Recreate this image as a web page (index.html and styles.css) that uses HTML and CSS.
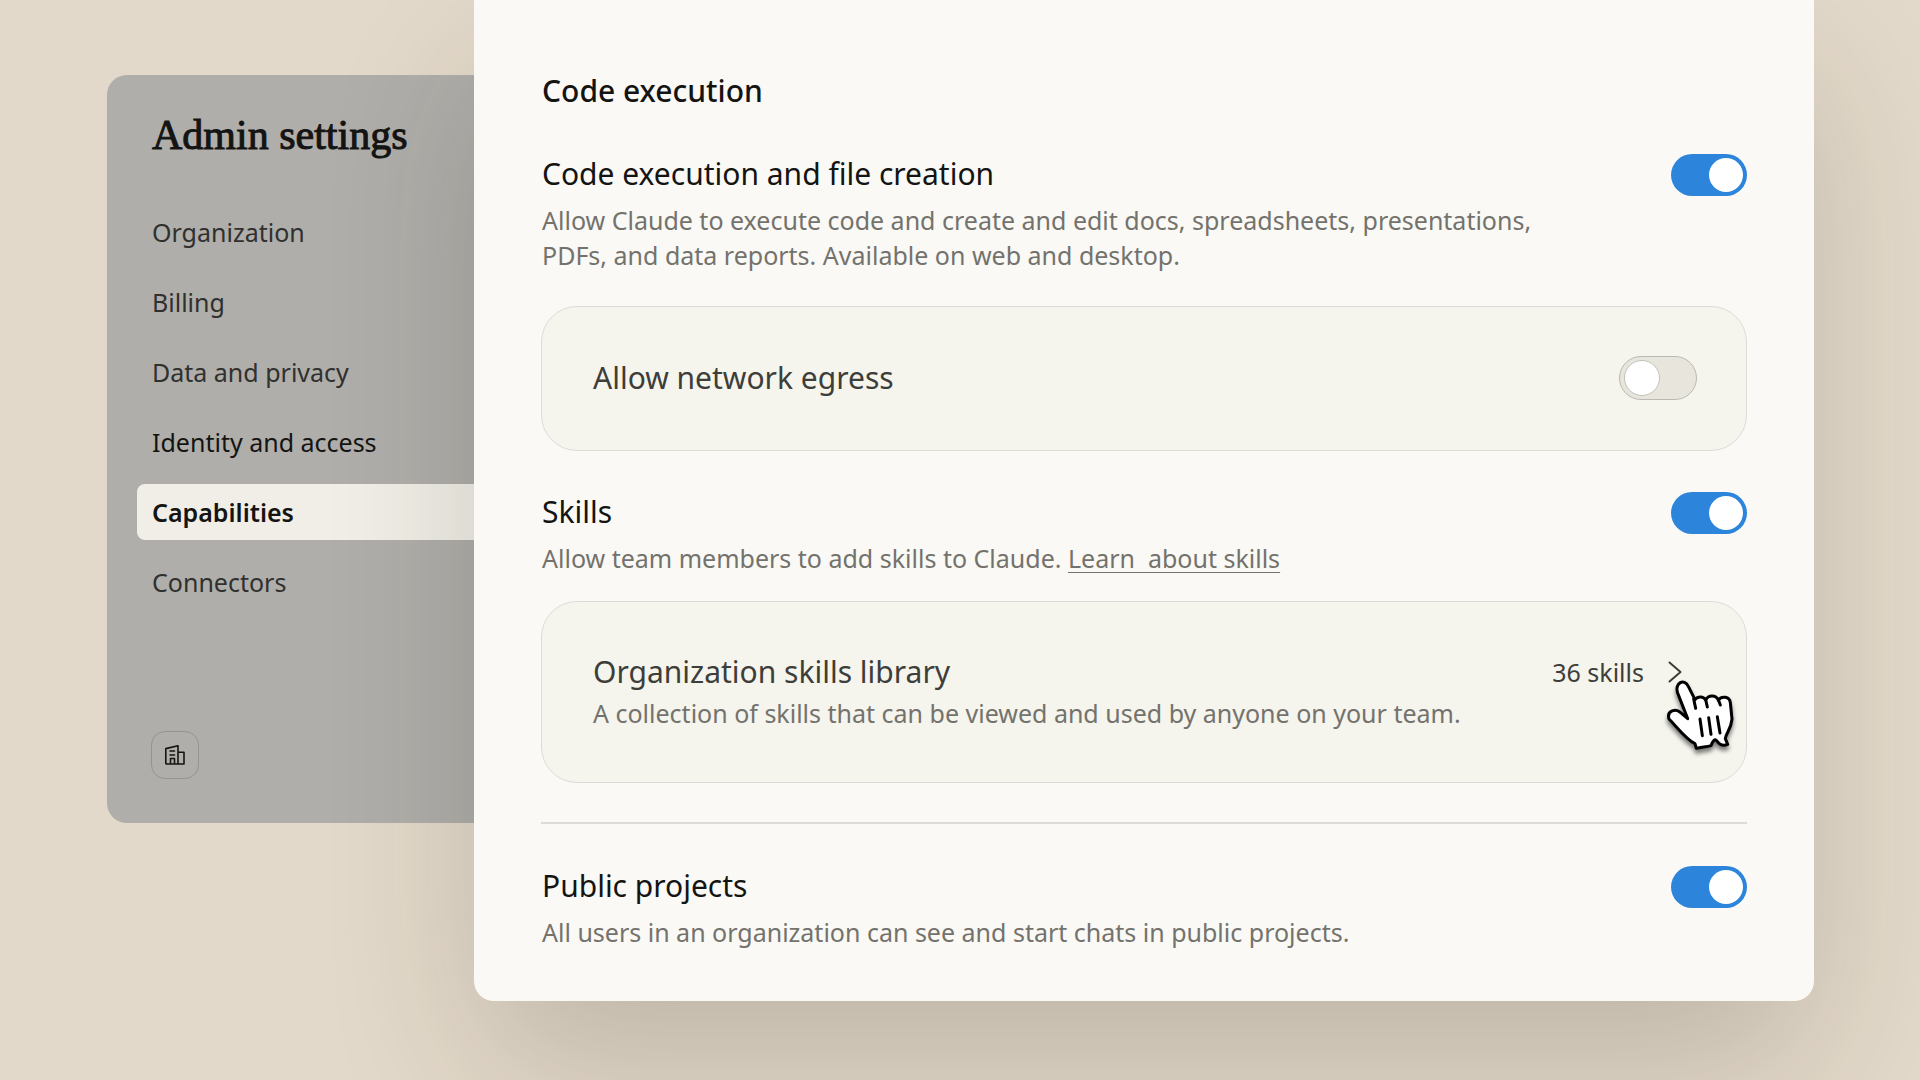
FILE: index.html
```html
<!DOCTYPE html>
<html lang="en">
  <head>
    <meta charset="UTF-8" />
    <meta name="viewport" content="width=device-width, initial-scale=1.0" />
    <title>Admin settings</title>
    <link rel="stylesheet" href="styles.css">
  </head>
  <body>
    <div class="layout">
      <aside class="sidebar">
        <h1>Admin settings</h1>
        <nav class="menu">
          <a href="#organization">Organization</a>
          <a href="#billing">Billing</a>
          <a href="#privacy">Data and privacy</a>
          <a href="#identity" class="strong">Identity and access</a>
          <a href="#capabilities" class="active" aria-current="page">Capabilities</a>
          <a href="#connectors">Connectors</a>
        </nav>
        <button type="button" class="org-button" aria-label="Switch organization">
          <svg viewBox="0 0 20 20" width="20" height="22" fill="none" stroke="currentColor" stroke-width="1.6" stroke-linejoin="round" stroke-linecap="round">
            <path d="M.8 18.500V3.600L13 .8v18.200H1.300zM13 7.300h6V19H13M5 6h4.500M5 10h4.500M5.500 18.800v-5.300h4v5.300" />
          </svg>
        </button>
      </aside>

      <main class="panel">
        <h2>Code execution</h2>

        <section class="setting">
          <div class="setting-text">
            <label for="codeExecution">Code execution and file creation</label>
            <p>Allow Claude to execute code and create and edit docs, spreadsheets, presentations, PDFs, and data reports. Available on web and desktop.</p>
          </div>
          <input type="checkbox" role="switch" class="toggle" id="codeExecution" checked />
        </section>

        <div class="card card-toggle">
          <label for="networkEgress">Allow network egress</label>
          <input type="checkbox" role="switch" class="toggle" id="networkEgress" />
        </div>

        <section class="setting">
          <div class="setting-text">
            <label for="skills">Skills</label>
            <p>Allow team members to add skills to Claude. <a href="#skills-help">Learn &nbsp;about skills</a></p>
          </div>
          <input type="checkbox" role="switch" class="toggle" id="skills" checked />
        </section>

        <div class="card card-library">
          <div class="setting-text">
            <h3>Organization skills library</h3>
            <p>A collection of skills that can be viewed and used by anyone on your team.</p>
          </div>
          <button type="button" class="library-button">
            36 skills
            <svg class="chevron" viewBox="0 0 14 22" width="14" height="22" fill="none" stroke="currentColor" stroke-width="2" stroke-linecap="round" stroke-linejoin="round">
              <path d="M1.500 1.500L12.500 11l-11 9.500" />
            </svg>
            <svg class="cursor" viewBox="436 176 216 240" width="72" height="80" aria-hidden="true">
              <path d="M504 295L474 218C464 188 494 172 506 198L526 238C534 228 550 226 558 239C566 224 588 222 596 239C606 226 630 228 632 247L637 296C634 330 618 338 617 355L624 372C612 378 600 374 590 360C585 356 580 360 574 376C560 380 545 380 530 384L526 370C500 358 470 318 448 296C440 270 470 264 482 276Z" />
              <path class="lines" d="M522 236L528 264M558 238L563 260M596 238L602 254M541 296L548 346M567 292L574 342M593 289L601 338" />
            </svg>
          </button>
        </div>

        <hr />

        <section class="setting">
          <div class="setting-text">
            <label for="publicProjects">Public projects</label>
            <p>All users in an organization can see and start chats in public projects.</p>
          </div>
          <input type="checkbox" role="switch" class="toggle" id="publicProjects" checked />
        </section>
      </main>
    </div>
  </body>
</html>
```

FILE: styles.css
```css
* {
  margin: 0;
  padding: 0;
  box-sizing: border-box;
}

body {
  min-height: 100vh;
  background-color: #e3d9ca;
  color: #141413;
  font-family: "Noto Sans", sans-serif;
  overflow: hidden;
}

a {
  color: inherit;
}

.layout {
  display: grid;
  grid-template-columns: 367px 1fr;
  align-items: start;
  margin: 0 106px 0 107px;
}

/* Sidebar */

.sidebar {
  display: flex;
  flex-direction: column;
  align-items: flex-start;
  margin-top: 75px;
  padding: 32px 0 44px 30px;
  background-color: #afaeaa;
  border-radius: 20px 0 0 20px;
}

h1 {
  padding-left: 15px;
  font-family: "Liberation Serif", serif;
  font-size: 42px;
  font-weight: 400;
  line-height: 56px;
  -webkit-text-stroke: 1px currentColor;
}

.menu {
  display: flex;
  flex-direction: column;
  gap: 14px;
  width: 100%;
  margin-top: 41px;
}

.menu a {
  padding-left: 15px;
  border-radius: 8px 0 0 8px;
  color: #30302e;
  font-size: 25px;
  line-height: 56px;
  text-decoration: none;
}

.menu .strong {
  color: #141413;
}

.menu .active {
  background-color: #f0eee6;
  color: #141413;
  font-weight: 600;
}

.org-button {
  display: flex;
  align-items: center;
  justify-content: center;
  width: 48px;
  height: 48px;
  margin: 121px 0 0 14px;
  border: 1px solid #949390;
  border-radius: 14px;
  background: none;
  color: #141413;
}

/* Main panel */

.panel {
  position: relative;
  padding: 71px 67px 51px;
  background-color: #faf9f5;
  border-radius: 0 0 20px 20px;
  box-shadow: 0 70px 160px -10px rgba(40, 35, 25, 0.2);
}

h2 {
  margin-bottom: 43px;
  padding-left: 1px;
  font-size: 30px;
  font-weight: 500;
  line-height: 40px;
}

.setting {
  display: flex;
  justify-content: space-between;
  align-items: flex-start;
  padding-left: 1px;
}

.setting-text {
  max-width: 1030px;
}

.setting-text label,
.card label,
h3 {
  display: block;
  font-size: 30px;
  font-weight: 400;
  line-height: 40px;
}

.setting-text p {
  margin-top: 9px;
  color: #73726c;
  font-size: 25px;
  line-height: 35px;
}

.setting-text a {
  text-underline-offset: 4px;
  text-decoration-thickness: 1px;
}

.card {
  display: flex;
  justify-content: space-between;
  align-items: center;
  padding: 49px 49px 50px 51px;
  border: 1px solid #dcdbd6;
  border-radius: 36px;
  background-color: #f5f4ed;
  color: #3d3d3a;
}

.card-toggle {
  margin: 33px 0 41px;
}

.card-library {
  align-items: flex-start;
  margin: 25px 0 39px;
  padding-top: 50px;
  padding-bottom: 51px;
}

.card-library p {
  margin-top: 4px;
}

.library-button {
  display: flex;
  align-items: center;
  gap: 24px;
  position: relative;
  padding-right: 15px;
  border: none;
  background: none;
  color: inherit;
  font-family: inherit;
  font-size: 25px;
  line-height: 40px;
}

/* Pointer lies over the chevron */
.cursor {
  position: absolute;
  top: 27px;
  right: -40px;
  fill: #fff;
  stroke: #000;
  stroke-width: 9;
  stroke-linejoin: round;
  stroke-linecap: round;
  filter: drop-shadow(0 4px 2px rgba(0, 0, 0, 0.5));
}

.cursor .lines {
  fill: none;
}

hr {
  height: 2px;
  margin-bottom: 42px;
  border: none;
  background-color: #dcdbd6;
}

/* Switches */

.toggle {
  appearance: none;
  display: flex;
  align-items: center;
  flex-shrink: 0;
  width: 78px;
  height: 44px;
  padding: 0 4px;
  border: 1px solid #bab9b2;
  border-radius: 22px;
  background-color: #e8e6dc;
}

.toggle::before {
  content: "";
  width: 34px;
  height: 34px;
  border: 1px solid #c2c1bb;
  border-radius: 50%;
  background-color: #fff;
}

.toggle:checked {
  justify-content: flex-end;
  width: 76px;
  height: 42px;
  border: none;
  background-color: #2c84db;
}

.toggle:checked::before {
  border: none;
}
```
